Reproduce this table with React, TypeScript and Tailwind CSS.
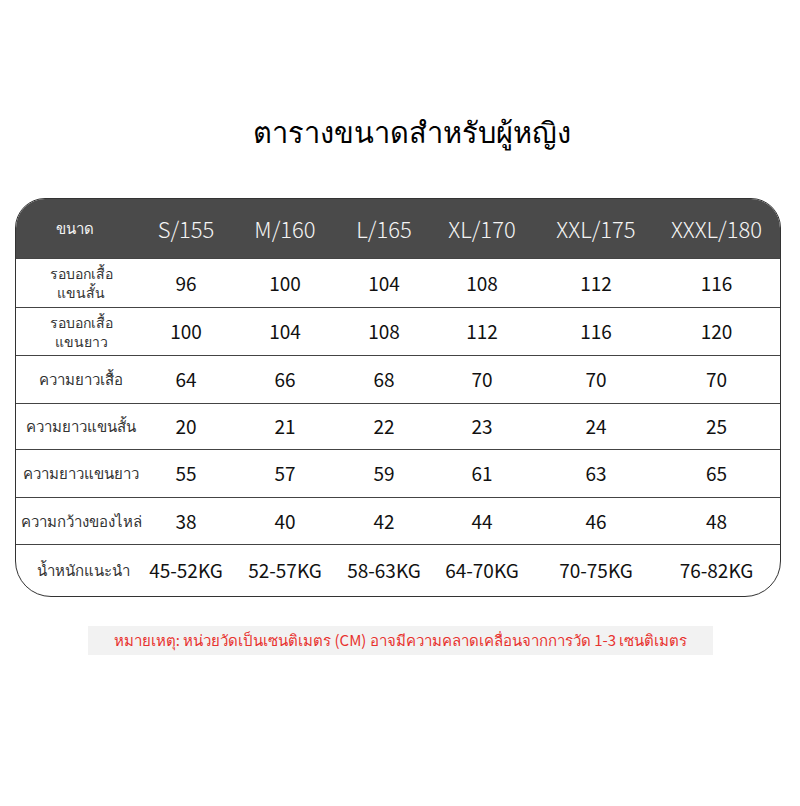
import React from "react";

const sizes = ["S/155", "M/160", "L/165", "XL/170", "XXL/175", "XXXL/180"];

const rows: { label: React.ReactNode; values: string[]; h: string; two?: boolean }[] = [
  { label: <><div>รอบอกเสื้อ</div><div>แขนสั้น</div></>, values: ["96", "100", "104", "108", "112", "116"], h: "h-[49px]", two: true },
  { label: <><div>รอบอกเสื้อ</div><div>แขนยาว</div></>, values: ["100", "104", "108", "112", "116", "120"], h: "h-[48px]", two: true },
  { label: "ความยาวเสื้อ", values: ["64", "66", "68", "70", "70", "70"], h: "h-[48px]" },
  { label: "ความยาวแขนสั้น", values: ["20", "21", "22", "23", "24", "25"], h: "h-[46px]" },
  { label: "ความยาวแขนยาว", values: ["55", "57", "59", "61", "63", "65"], h: "h-[48px]" },
  { label: "ความกว้างของไหล่", values: ["38", "40", "42", "44", "46", "48"], h: "h-[47px]" },
];

const weights = ["45-52KG", "52-57KG", "58-63KG", "64-70KG", "70-75KG", "76-82KG"];

const grid = "grid grid-cols-[130px_80px_118px_80px_116px_112px_129px] items-center";

export default function App() {
  return (
    <div
      className="w-[800px] h-[806px] bg-white flex flex-col"
      style={{ fontFamily: '"Noto Sans CJK SC", "Noto Sans", sans-serif' }}
    >
      <h1 className="mt-[110px] ml-[253px] h-[40px] leading-[40px] text-[29px] font-medium text-black whitespace-nowrap">
        ตารางขนาดสำหรับผู้หญิง
      </h1>
      <div className="mt-[48px] ml-[15px] w-[766px] border border-[#333] rounded-t-[30px] rounded-b-[36px] overflow-hidden">
        <div className={`${grid} h-[59px] bg-[#4a4a4a] text-[#f4f4f4]`}>
          <div className="text-center text-[15px] pr-3">ขนาด</div>
          {sizes.map((s) => (
            <div key={s} className="text-center text-[22px] font-light">{s}</div>
          ))}
        </div>
        {rows.map((r, i) => (
          <div key={i} className={`${grid} ${r.h} border-t border-[#444]`}>
            <div className={`text-center ${r.two ? "text-[14px] leading-[19px]" : "text-[15px]"} text-[#333] whitespace-nowrap`}>{r.label}</div>
            {r.values.map((v, j) => (
              <div key={j} className="text-center text-[19px] text-[#111]">{v}</div>
            ))}
          </div>
        ))}
        <div className={`${grid} h-[52px] border-t border-[#444]`}>
          <div className="text-center text-[15px] text-[#333] pl-1">น้ำหนักแนะนำ</div>
          {weights.map((w) => (
            <div key={w} className="text-center text-[19px] text-[#111] whitespace-nowrap">{w}</div>
          ))}
        </div>
      </div>
      <div className="mt-[29px] ml-[88px] w-[625px] h-[29px] bg-[#f2f2f2] flex items-center justify-center text-[15px] text-[#e8322f] whitespace-nowrap">
        หมายเหตุ: หน่วยวัดเป็นเซนติเมตร (CM) อาจมีความคลาดเคลื่อนจากการวัด 1-3 เซนติเมตร
      </div>
    </div>
  );
}
